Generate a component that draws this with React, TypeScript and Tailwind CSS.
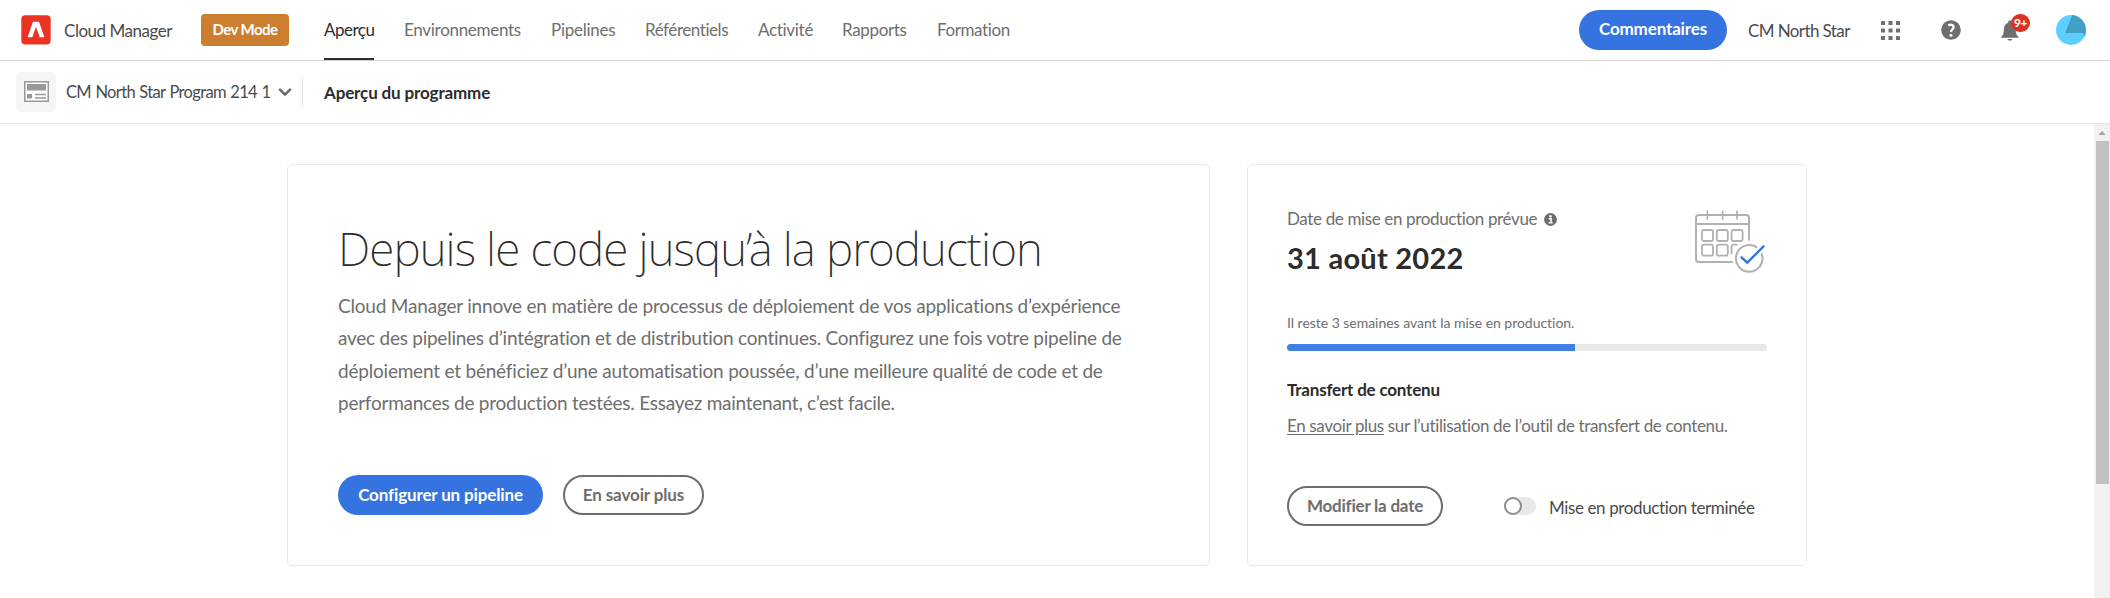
const navItems = [
  { label: "Environnements", width: "w-[117px]", tracking: "tracking-[-0.29px]" },
  { label: "Pipelines", width: "w-[64px]", tracking: "tracking-[-0.25px]" },
  { label: "Référentiels", width: "w-[83px]", tracking: "tracking-[-0.44px]" },
  { label: "Activité", width: "w-[54px]", tracking: "tracking-[-0.3px]" },
  { label: "Rapports", width: "w-[65px]", tracking: "tracking-[-0.35px]" },
  { label: "Formation", width: "w-[73px]", tracking: "tracking-[-0.4px]" },
];

function AdobeLogo() {
  return (
    <svg width="30" height="30" viewBox="0 0 30 30" className="shrink-0">
      <rect x="0.3" y="0.3" width="29.4" height="29.2" rx="4" fill="#e93423" />
      <path d="M12 6.8H18L23.4 22.2H17.5L16.3 18.8H14.2L15.2 15.3L15 12.2L11.3 22.2H6.6Z" fill="#fff" />
      <path d="M15 12.2L18.9 22.2H16.5L15.4 19H12.6Z" fill="#e93423" />
    </svg>
  );
}

function ProgramIcon() {
  return (
    <svg width="25" height="21" viewBox="0 0 25 21">
      <rect x="0.75" y="0.75" width="23.5" height="19.5" fill="#fff" stroke="#989898" strokeWidth="1.5" />
      <rect x="3" y="3" width="19" height="6.5" fill="#989898" />
      <rect x="3" y="13" width="5" height="4.5" fill="#989898" />
      <path d="M11 13.5H22M11 17H22" stroke="#989898" strokeWidth="1.3" />
    </svg>
  );
}

function AppsIcon() {
  return (
    <svg width="19" height="19" viewBox="0 0 19 19" fill="#6e6e6e" className="shrink-0">
      {[0, 7.5, 15].map((y) =>
        [0, 7.5, 15].map((x) => <rect key={`${x}-${y}`} x={x} y={y} width="4" height="4" rx="0.5" />)
      )}
    </svg>
  );
}

function HelpIcon() {
  return (
    <svg width="20" height="20" viewBox="0 0 20 20" className="shrink-0">
      <circle cx="10" cy="10" r="9.8" fill="#6e6e6e" />
      <path d="M7.2 5.5C8.8 4.3 12.6 4.2 12.6 7.1C12.6 9.1 10 9.4 10 12" fill="none" stroke="#fff" strokeWidth="2.3" />
      <circle cx="10" cy="15.2" r="1.5" fill="#fff" />
    </svg>
  );
}

function BellIcon() {
  return (
    <svg width="18" height="21" viewBox="0 0 18 21" fill="#6e6e6e">
      <path d="M0.3 17.8V16.7C2.2 15.3 2.7 13.2 2.9 9.3C3.1 5.8 4.6 3.6 7.3 2.8V1.6C7.3 0.2 10.2 0.2 10.2 1.6V2.8C13 3.6 14.4 5.8 14.6 9.3C14.8 13.2 15.4 15.3 17.4 16.7V17.8Z" />
      <path d="M6.5 19H11.2C10.8 21.3 6.9 21.3 6.5 19Z" />
    </svg>
  );
}

function Avatar() {
  return (
    <svg width="30" height="30" viewBox="0 0 30 30" className="shrink-0">
      <circle cx="15" cy="15" r="15" fill="#5ccfff" />
      <path d="M16.3 0.1A15 15 0 0 1 28.2 22.1L27 18H9Z" fill="#449fc5" />
    </svg>
  );
}

function InfoIcon() {
  return (
    <svg width="13" height="13" viewBox="0 0 13 13" className="shrink-0">
      <circle cx="6.5" cy="6.5" r="6.4" fill="#6e6e6e" />
      <circle cx="6.5" cy="3.2" r="1.2" fill="#fff" />
      <path d="M4.7 5.7H7.1V9.7M4.6 9.8H8.6" fill="none" stroke="#fff" strokeWidth="1.5" />
    </svg>
  );
}

function CalendarIcon() {
  return (
    <svg width="72" height="64" viewBox="0 0 72 64" fill="none" stroke="#b1b1b1" strokeWidth="2" strokeLinecap="round">
      <path d="M38 52H5Q2 52 2 49V8Q2 5 5 5H52Q55 5 55 8V30" />
      <path d="M2 14H55" />
      <path d="M13.3 1V9M28.6 1V9M43 1V9" strokeWidth="1.7" />
      <g strokeWidth="1.8">
        <rect x="8" y="20" width="11" height="11" rx="2" />
        <rect x="22.8" y="20" width="11" height="11" rx="2" />
        <rect x="37.6" y="20" width="11" height="11" rx="2" />
        <rect x="8" y="34.7" width="11" height="11" rx="2" />
        <rect x="22.8" y="34.7" width="11" height="11" rx="2" />
        <path d="M37.6 43.5V37Q37.6 34.7 40 34.7H43" />
      </g>
      <path d="M62.5 37.2A13.3 13.3 0 1 0 67.8 44" />
      <path d="M47.6 47.3L53.2 52.6L69.6 36.4" stroke="#2c73e6" strokeWidth="2.3" />
    </svg>
  );
}

export default function App() {
  return (
    <div className="flex h-[598px] w-[2110px] flex-col overflow-hidden bg-white font-['Lato','Noto_Sans',sans-serif] text-[17px] text-[#6e6e6e]">
      <header className="flex h-[61px] shrink-0 items-center border-b border-[#d3d3d3] pl-[21px] pr-6">
        <AdobeLogo />
        <span className="ml-[13px] w-[137px] whitespace-nowrap pt-px tracking-[-0.48px] text-[#4b4b4b]">Cloud Manager</span>
        <span className="flex h-8 w-[88px] items-center justify-center rounded-[4px] bg-[#cb7e30] pb-[2px] text-[15px] font-bold tracking-[-0.55px] text-white">
          Dev Mode
        </span>
        <nav className="ml-[35px] flex h-full items-center gap-[30px] whitespace-nowrap">
          <a className="flex h-full w-[50px] items-center border-b-2 border-[#2c2c2c] pt-[2px] tracking-[-0.5px] text-[#2c2c2c]">Aperçu</a>
          {navItems.map((item) => (
            <a key={item.label} className={`flex h-full items-center ${item.width} ${item.tracking}`}>
              {item.label}
            </a>
          ))}
        </nav>
        <div className="ml-auto flex items-center">
          <button className="flex h-10 w-[148px] items-center justify-center rounded-full bg-[#3574e0] pb-[3px] font-bold tracking-[-0.15px] text-white">
            Commentaires
          </button>
          <span className="ml-[21px] w-[133px] whitespace-nowrap pt-px tracking-[-0.6px] text-[#4b4b4b]">CM North Star</span>
          <AppsIcon />
          <span className="ml-[41px] flex"><HelpIcon /></span>
          <span className="relative ml-10 flex w-[55px] pt-px">
            <BellIcon />
            <span className="absolute left-[10px] top-[-5px] flex h-[18px] w-[19px] items-center justify-center rounded-full bg-[#da3223] text-[12px] font-black leading-none tracking-[-0.4px] text-white">
              9+
            </span>
          </span>
          <Avatar />
        </div>
      </header>

      <div className="flex h-[63px] shrink-0 items-center border-b border-[#e5e5e5] pl-4">
        <span className="flex size-10 items-center justify-center rounded-[4px] bg-[#f5f5f5] pb-px">
          <ProgramIcon />
        </span>
        <span className="ml-[10px] w-[212px] whitespace-nowrap text-[16.5px] tracking-[-0.65px] text-[#4b4b4b] [word-spacing:0.8px]">CM North Star Program 214 1</span>
        <svg width="14" height="9" viewBox="0 0 14 9" fill="none" stroke="#6e6e6e" strokeWidth="2.6" strokeLinecap="round" strokeLinejoin="round">
          <path d="M2 1.7L7 6.7L12 1.7" />
        </svg>
        <span className="ml-[10px] h-[30px] w-px bg-[#e5e5e5]" />
        <span className="ml-[21px] pt-px font-bold tracking-[-0.14px] text-[#2c2c2c]">Aperçu du programme</span>
      </div>

      <div className="flex min-h-0 flex-1">
        <main className="flex flex-1 items-start gap-[37px] pl-[287px] pt-10">
          <section className="flex h-[402px] w-[923px] flex-col rounded-[5px] border border-[#e8e8e8] pl-[50px] pt-[50px]">
            <h1 className="h-[68px] whitespace-nowrap font-['Noto_Sans',sans-serif] text-[46px] font-extralight leading-[66px] tracking-[-0.9px] text-[#2c2c2c]">
              Depuis le code jusqu’à la production
            </h1>
            <p className="mt-[7px] flex flex-col whitespace-nowrap text-[19px] leading-[32.4px]">
              <span className="tracking-[-0.2px]">Cloud Manager innove en matière de processus de déploiement de vos applications d’expérience</span>
              <span className="tracking-[-0.25px]">avec des pipelines d’intégration et de distribution continues. Configurez une fois votre pipeline de</span>
              <span className="tracking-[-0.21px]">déploiement et bénéficiez d’une automatisation poussée, d’une meilleure qualité de code et de</span>
              <span className="tracking-[-0.25px]">performances de production testées. Essayez maintenant, c’est facile.</span>
            </p>
            <div className="mt-[55px] flex gap-5">
              <button className="flex h-10 w-[205px] items-center justify-center rounded-full bg-[#3574e0] font-bold tracking-[-0.14px] text-white">
                Configurer un pipeline
              </button>
              <button className="flex h-10 w-[141px] items-center justify-center rounded-full border-2 border-[#6e6e6e] font-bold tracking-[-0.12px]">
                En savoir plus
              </button>
            </div>
          </section>

          <section className="flex h-[402px] w-[560px] flex-col rounded-[5px] border border-[#e8e8e8] pl-[39px] pr-[39px] pt-[42px]">
            <div className="flex h-[106px] justify-between">
              <div>
                <div className="flex h-6 items-center gap-[7px] whitespace-nowrap tracking-[-0.36px]">
                  Date de mise en production prévue
                  <InfoIcon />
                </div>
                <div className="mt-[7px] text-[29px] font-bold leading-10 tracking-[0.25px] text-[#2c2c2c]">31 août 2022</div>
              </div>
              <div className="mr-px pt-[3px]"><CalendarIcon /></div>
            </div>
            <div className="text-[14px] leading-5 tracking-[-0.03px]">Il reste 3 semaines avant la mise en production.</div>
            <div className="mt-[11px] h-[7px] shrink-0 overflow-hidden rounded-full bg-[#e9e9e9]">
              <div className="h-full w-[60%] bg-[#4080e3]" />
            </div>
            <div className="mt-[27px] leading-6 font-bold tracking-[-0.2px] text-[#2c2c2c]">Transfert de contenu</div>
            <p className="mt-3 whitespace-nowrap leading-6 tracking-[-0.36px]">
              <a className="underline underline-offset-2">En savoir plus</a> sur l’utilisation de l’outil de transfert de contenu.
            </p>
            <div className="mt-12 flex items-center">
              <button className="flex h-10 w-[156px] items-center justify-center rounded-full border-2 border-[#6e6e6e] pb-px font-bold tracking-[-0.22px]">
                Modifier la date
              </button>
              <span className="ml-[61px] flex h-[18px] w-8 rounded-full bg-[#e9e9e9]">
                <span className="size-[18px] rounded-full border-2 border-[#8e8e8e] bg-white" />
              </span>
              <span className="ml-[13px] whitespace-nowrap pt-[3px] tracking-[-0.38px] text-[#4b4b4b]">Mise en production terminée</span>
            </div>
          </section>
        </main>

        <div className="flex w-4 shrink-0 flex-col items-center bg-[#f1f1f1]">
          <svg width="16" height="17" viewBox="0 0 16 17" className="shrink-0">
            <path d="M4.5 11L8 7L11.5 11Z" fill="#a3a3a3" />
          </svg>
          <div className="h-[343px] w-[13px] bg-[#c1c1c1]" />
        </div>
      </div>
    </div>
  );
}
